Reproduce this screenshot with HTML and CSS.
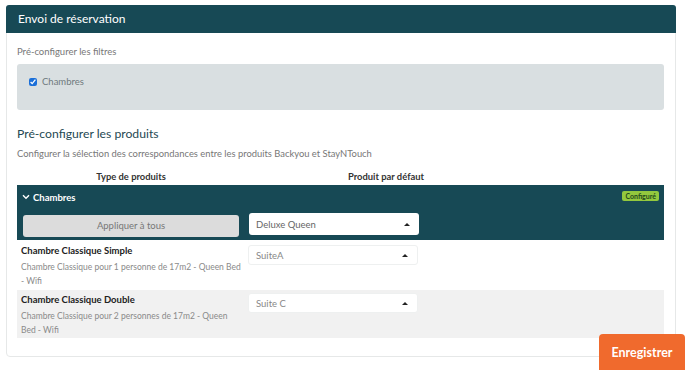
FILE: index.html
```html
<!DOCTYPE html>
<html lang="fr">
<head>
<meta charset="utf-8">
<title>Envoi de réservation</title>
<link rel="stylesheet" href="styles.css">
</head>
<body>
<div class="card">
  <div class="card-header">Envoi de réservation</div>
  <div class="card-body">
    <div class="label">Pré-configurer les filtres</div>
    <div class="filter-box">
      <label class="check"><input type="checkbox" checked> Chambres</label>
    </div>
    <h2 class="section-title">Pré-configurer les produits</h2>
    <div class="section-desc">Configurer la sélection des correspondances entre les produits Backyou et StayNTouch</div>
    <div class="grid head">
      <div class="hcell">Type de produits</div>
      <div class="hcell">Produit par défaut</div>
      <div></div>
    </div>
    <div class="group">
      <div class="group-top">
        <div class="group-name">
          <svg class="chev" width="8" height="6" viewBox="0 0 8 6"><path d="M1 1.2 L4 4.3 L7 1.2" fill="none" stroke="#fff" stroke-width="1.4"/></svg>
          Chambres
        </div>
        <span class="badge">Configuré</span>
      </div>
      <div class="grid group-actions">
        <div class="cell-pad"><button class="apply">Appliquer à tous</button></div>
        <div class="cell-sel"><div class="select big">Deluxe Queen<span class="caret"></span></div></div>
        <div></div>
      </div>
    </div>
    <div class="grid row">
      <div class="prod">
        <div class="prod-name">Chambre Classique Simple</div>
        <div class="prod-desc">Chambre Classique pour 1 personne de 17m2 - Queen Bed - Wifi</div>
      </div>
      <div class="cell-sel2"><div class="select">SuiteA<span class="caret"></span></div></div>
      <div></div>
    </div>
    <div class="grid row alt">
      <div class="prod">
        <div class="prod-name">Chambre Classique Double</div>
        <div class="prod-desc">Chambre Classique pour 2 personnes de 17m2 - Queen Bed - Wifi</div>
      </div>
      <div class="cell-sel2 alt-sel"><div class="select">Suite C<span class="caret"></span></div></div>
      <div></div>
    </div>
  </div>
</div>
<button class="save">Enregistrer</button>
</body>
</html>
```

FILE: styles.css
```css
* { box-sizing: border-box; }
html, body { margin: 0; padding: 0; background: #fff; }
body {
  font-family: Lato, "Open Sans", sans-serif;
  color: #333;
  padding: 5px 0 0 6px;
}
.card {
  width: 670px;
  border: 1px solid #e6e8e8;
  border-radius: 4px;
  background: #fff;
}
.card-header {
  height: 28px;
  background: #174955;
  color: #fff;
  font-size: 12px;
  line-height: 28px;
  padding-left: 12px;
  border-radius: 3px 3px 0 0;
  margin: -1px -1px 0 -1px;
}
.card-body {
  padding: 12px 11px 18px 10px;
}
.label {
  font-size: 9.5px;
  color: #777;
  line-height: 14px;
}
.filter-box {
  margin-top: 5px;
  height: 46px;
  background: #d9dfe1;
  border-radius: 3px;
  padding: 11px 11px 0 12px;
}
.check {
  display: flex;
  align-items: center;
  gap: 5px;
  font-size: 9.5px;
  color: #6f7a7d;
  line-height: 14px;
}
.check input {
  width: 8px;
  height: 8px;
  margin: 0;
  accent-color: #1b6fd8;
}
.section-title {
  margin: 16px 0 0 0;
  font-size: 12.2px;
  font-weight: 400;
  color: #1f4953;
  line-height: 16px;
}
.section-desc {
  font-size: 9.4px;
  color: #777;
  line-height: 14px;
  margin-top: 5px;
}
.grid {
  display: grid;
  grid-template-columns: 228px 282px 1fr;
}
.head {
  margin-top: 6px;
  height: 18px;
  align-items: center;
}
.hcell {
  text-align: center;
  font-weight: 700;
  font-size: 9.4px;
  color: #333;
}
.group {
  background: #174955;
  height: 55px;
}
.group-top {
  display: flex;
  justify-content: space-between;
  align-items: center;
  height: 24px;
  padding: 0 5px 0 5px;
}
.group-name {
  display: flex;
  align-items: center;
  gap: 3px;
  color: #fff;
  font-weight: 700;
  font-size: 9.5px;
}
.badge {
  background: #93c83e;
  color: #234a1a;
  font-size: 7px;
  font-weight: 700;
  line-height: 10px;
  padding: 0 3px;
  border-radius: 2px;
  margin-top: -2px;
}
.group-actions {
  padding-top: 4px;
}
.cell-pad { padding-left: 6px; padding-right: 6px; }
.apply {
  width: 216px;
  height: 22px;
  border: 0;
  border-radius: 3px;
  background: #dcdcdc;
  color: #777;
  font-family: Lato, sans-serif;
  font-size: 9.5px;
  padding: 0;
}
.cell-sel { padding-left: 4px; }
.select {
  width: 170px;
  height: 20px;
  background: #fff;
  border: 1px solid #eef0f0;
  border-radius: 3px;
  font-size: 9.5px;
  color: #888;
  display: flex;
  align-items: center;
  justify-content: space-between;
  padding: 0 9px 0 7px;
}
.select.big {
  height: 22px;
  border: 0;
  color: #666;
}
.caret {
  width: 0;
  height: 0;
  border-left: 3px solid transparent;
  border-right: 3px solid transparent;
  border-bottom: 3px solid #222;
}
.row {
  height: 49px;
  margin-top: 1px;
}
.row.alt { background: #f1f1f1; height: 48px; margin-top: 0; }
.prod { padding: 3px 4px 0 4px; }
.prod-name {
  font-weight: 700;
  font-size: 9.5px;
  color: #222;
  line-height: 14px;
}
.prod-desc {
  font-size: 8.5px;
  color: #8a8a8a;
  line-height: 14px;
  margin-top: 2px;
}
.cell-sel2 { padding: 4px 0 0 3px; }
.alt-sel { padding-top: 3px; }
.save {
  position: fixed;
  left: 599px;
  top: 334px;
  width: 86px;
  height: 44px;
  background: #f06a2d;
  color: #fff;
  border: 0;
  border-radius: 4px;
  font-family: Lato, sans-serif;
  font-weight: 700;
  font-size: 12.5px;
  padding: 0 0 8px 0;
}
```
